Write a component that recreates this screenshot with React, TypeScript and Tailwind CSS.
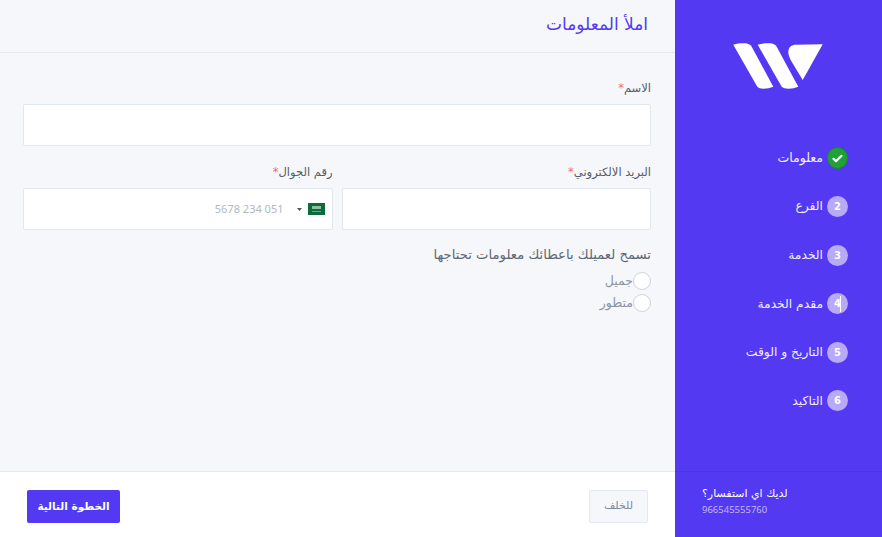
const FONT = "font-['DejaVu_Sans',sans-serif]";

const steps = [
  { n: "2", label: "الفرع" },
  { n: "3", label: "الخدمة" },
  { n: "4", label: "مقدم الخدمة", cursor: true },
  { n: "5", label: "التاريخ و الوقت" },
  { n: "6", label: "التاكيد" },
];

function Logo() {
  return (
    <svg width="90" height="46" viewBox="0 0 90 46" fill="#fff">
      <path d="M0.3 1.7C4 0.6 8 0.2 12 0.3C15 0.5 17.3 1.6 18.7 3.7L40.3 43.7C37 45 33.5 45.8 30.3 45.7C27.5 45.6 25.6 45 24.3 43.7Z" />
      <path d="M24.7 1.7C28.5 0.6 33 0.2 37 0.3C40 0.5 42.3 1.6 43.7 3.7L65.3 43.7C62 45 58.5 45.8 55.3 45.7C52.5 45.6 50 45 48.7 43.7Z" />
      <path d="M89.7 1.3L69.7 37L58.7 18.7C56.5 15 55.3 12 55.3 8.7C55.5 4.5 58 2 62 1.7Z" />
    </svg>
  );
}

function Label({ text, required }: { text: string; required?: boolean }) {
  return (
    <label className="block text-[11.5px] leading-[16px] text-[#555c68] mb-[8px]">
      {text}
      {required && <span className="text-[#f06a86]">*</span>}
    </label>
  );
}

function Radio({ text }: { text: string }) {
  return (
    <div className="flex items-center h-[18px]">
      <span className="w-[18px] h-[18px] rounded-full bg-white border border-[#ced4da]" />
      <span className="text-[12.5px] text-[#8a94a6]">{text}</span>
    </div>
  );
}

export default function App() {
  return (
    <div dir="rtl" className={`flex w-[882px] h-[537px] overflow-hidden ${FONT}`}>
      <aside className="w-[207px] shrink-0 bg-[#5339f2] flex flex-col">
        <div className="flex justify-center pt-[43px] pr-[2px] h-[134px]">
          <Logo />
        </div>
        <div className="flex-1 flex flex-col pr-[34px] pt-[13.5px] gap-[27.6px]">
          <div className="flex items-center gap-[4px] h-[21px]">
            <span className="w-[21px] h-[22px] rounded-full bg-[#21a038] border border-[#158a2c] flex items-center justify-center">
              <svg width="11" height="9" viewBox="0 0 11 9" fill="none" stroke="#fff" strokeWidth="2.2" strokeLinecap="round" strokeLinejoin="round">
                <path d="M1.5 4.8L4 7.2L9.5 1.8" />
              </svg>
            </span>
            <span className="text-[12.5px] text-[#f1eeff]">معلومات</span>
          </div>
          {steps.map((s) => (
            <div key={s.n} className="flex items-center gap-[4px] h-[21px]">
              <span className="relative w-[21px] h-[21px] rounded-full bg-[#b8aaf8] flex items-center justify-center text-[10px] font-bold text-white">
                {s.n}
                {s.cursor && <span className="absolute right-[7px] top-[3px] w-px h-[16px] bg-white" />}
              </span>
              <span className="text-[12.3px] text-[#f1eeff]">{s.label}</span>
            </div>
          ))}
        </div>
        <div className="h-[66px] border-t border-[#4a4a7a] flex flex-col items-end pl-[27px] pt-[14px]">
          <div className="text-[11px] leading-[16px] text-white">لديك اي استفسار؟</div>
          <div className="font-['Noto_Sans',sans-serif] text-[9.5px] leading-[15px] text-[#c3b8fa]">966545555760</div>
        </div>
      </aside>

      <main className="flex-1 flex flex-col bg-[#f5f7fb]">
        <header className="h-[53px] shrink-0 border-b border-[#e4e9f1] flex items-center pr-[27px] pb-[2px]">
          <h1 className="text-[17px] text-[#5339f2]">املأ المعلومات</h1>
        </header>
        <div className="flex-1 pt-[27px] pr-[24px] pl-[23px]">
          <Label text="الاسم" required />
          <div className="h-[42px] bg-white border border-[#e1e8f0] rounded-[2px]" />
          <div className="flex gap-[9px] mt-[18px]">
            <div className="flex-1">
              <Label text="البريد الالكتروني" required />
              <div className="h-[42px] bg-white border border-[#e1e8f0] rounded-[2px]" />
            </div>
            <div className="flex-1">
              <Label text="رقم الجوال" required />
              <div className="h-[42px] bg-white border border-[#e1e8f0] rounded-[2px] flex items-center pr-[6px]">
                <svg width="19" height="14" viewBox="0 0 19 14">
                  <rect width="19" height="14" fill="#fff" />
                  <rect x="1" y="1" width="17" height="12" fill="#0d6b3b" />
                  <rect x="5" y="4" width="9" height="3" fill="#8fbd9f" />
                  <rect x="5" y="9" width="9" height="1" fill="#6fa585" />
                </svg>
                <svg width="5" height="3" viewBox="0 0 5 3" className="mr-[5px]">
                  <path d="M0 0H5L2.5 3Z" fill="#555" />
                </svg>
                <span className="mr-[13px] font-['Noto_Sans',sans-serif] text-[11px] text-[#b3b8bf]">051 234 5678</span>
              </div>
            </div>
          </div>
          <div className="text-[13.2px] leading-[18px] text-[#5f6673] mt-[16px] mb-[8px]">تسمح لعميلك باعطائك معلومات تحتاجها</div>
          <div className="flex flex-col gap-[4px]">
            <Radio text="جميل" />
            <Radio text="متطور" />
          </div>
        </div>
        <footer className="h-[66px] shrink-0 bg-white border-t border-[#e4e9f1] flex items-start justify-between px-[27px] pt-[18px]">
          <button className="w-[59px] h-[33px] bg-[#f5f7fb] border border-[#e4e9f1] rounded-[2px] text-[11px] text-[#7d8797]">للخلف</button>
          <button className="w-[93px] h-[33px] bg-[#5339f2] rounded-[2px] text-[10.5px] font-bold text-white">الخطوة التالية</button>
        </footer>
      </main>
    </div>
  );
}
